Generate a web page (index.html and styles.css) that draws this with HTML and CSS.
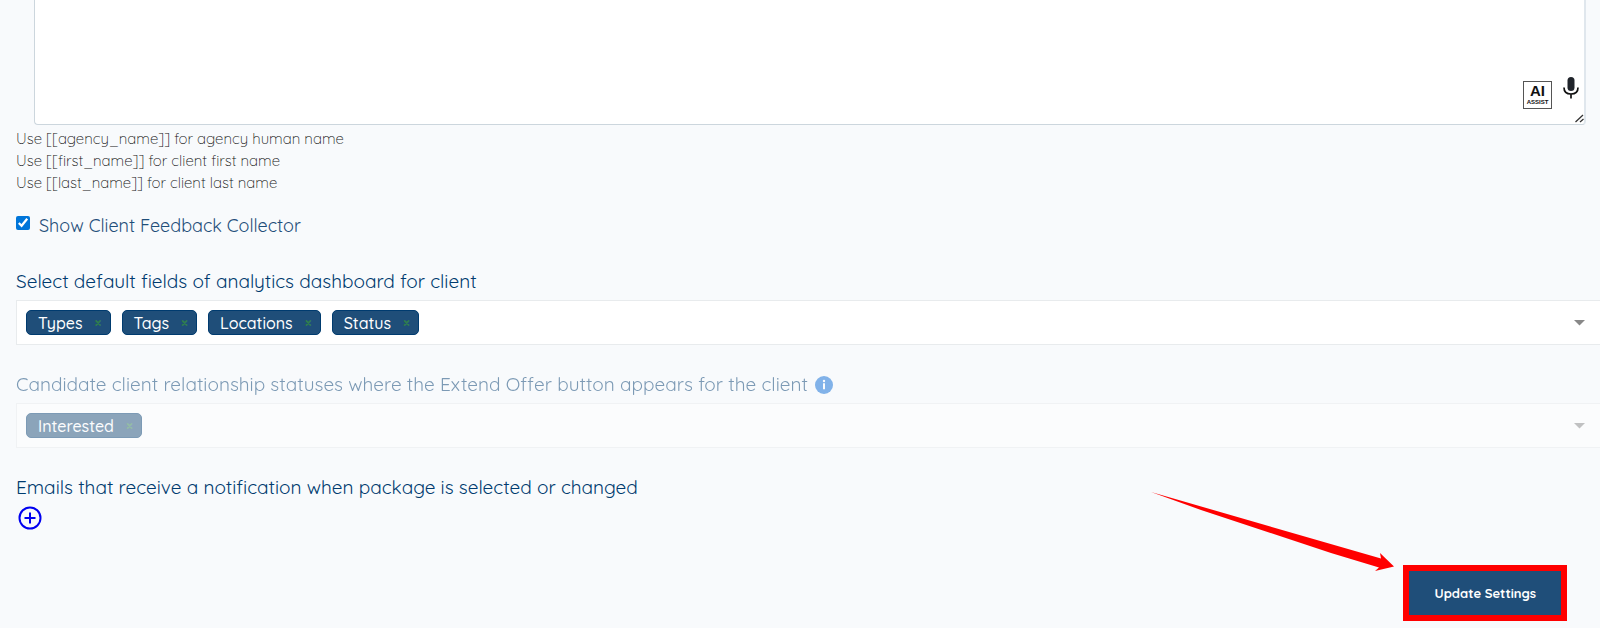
FILE: index.html
```html
<!DOCTYPE html>
<html lang="en">
<head>
<meta charset="utf-8">
<title>Client Settings</title>
<meta name="viewport" content="width=device-width, initial-scale=1">
<link rel="stylesheet" href="styles.css">
</head>
<body>
<form class="settings">
  <div class="editor">
    <textarea class="editor-input" aria-label="Message template"></textarea>
    <div class="editor-tools">
      <button type="button" class="ai-assist"><span class="ai-title">AI</span><span class="ai-sub">ASSIST</span></button>
      <button type="button" class="icon-button" aria-label="Dictate">
        <svg width="16" height="22" viewBox="0 0 16 22"><rect x="4.5" y="0" width="7" height="14" rx="3.5" fill="#20242b"/><path d="M1 10.5C1 15 4 17 8 17s7-2 7-6.500M8 17v4.500" fill="none" stroke="#111" stroke-width="1.700"/></svg>
      </button>
    </div>
    <svg class="editor-grip" width="9" height="9" viewBox="0 0 9 9"><path d="M0.500 8L8 1M5 8L8.500 5" stroke="#333" stroke-width="1.300" fill="none"/></svg>
  </div>

  <div class="help">
    <p>Use [[agency_name]] for agency human name</p>
    <p>Use [[first_name]] for client first name</p>
    <p>Use [[last_name]] for client last name</p>
  </div>

  <label class="check"><input type="checkbox" class="check-box" checked><span>Show Client Feedback Collector</span></label>

  <section class="field">
    <h2 class="field-label">Select default fields of analytics dashboard for client</h2>
    <div class="select">
      <span class="chip">Types<button type="button" class="chip-remove" aria-label="Remove Types">×</button></span>
      <span class="chip">Tags<button type="button" class="chip-remove" aria-label="Remove Tags">×</button></span>
      <span class="chip">Locations<button type="button" class="chip-remove" aria-label="Remove Locations">×</button></span>
      <span class="chip">Status<button type="button" class="chip-remove" aria-label="Remove Status">×</button></span>
      <button type="button" class="icon-button select-toggle" aria-label="Open fields list"><svg width="11" height="6" viewBox="0 0 11 6"><path d="M0 0h11L5.500 5.500z" fill="#888"/></svg></button>
    </div>
  </section>

  <section class="field field-disabled">
    <h2 class="field-label">Candidate client relationship statuses where the Extend Offer button appears for the client
      <svg class="info" width="18" height="18" viewBox="0 0 18 18"><circle cx="9" cy="9" r="9" fill="#0a6bd6"/><path d="M9 7.200V13.300" stroke="#fff" stroke-width="2" fill="none"/><circle cx="9" cy="5" r="1.200" fill="#fff"/></svg>
    </h2>
    <div class="select">
      <span class="chip">Interested<button type="button" class="chip-remove" aria-label="Remove Interested" disabled>×</button></span>
      <button type="button" class="icon-button select-toggle" aria-label="Open statuses list" disabled><svg width="11" height="6" viewBox="0 0 11 6"><path d="M0 0h11L5.500 5.500z" fill="#888"/></svg></button>
    </div>
  </section>

  <section class="field">
    <h2 class="field-label">Emails that receive a notification when package is selected or changed</h2>
    <button type="button" class="icon-button add" aria-label="Add email"><svg width="24" height="24" viewBox="0 0 24 24"><g fill="none" stroke="#0000f0" stroke-width="2"><circle cx="12" cy="12" r="10.500"/><path d="M12 6.500v11M6.500 12h11"/></g></svg></button>
  </section>

  <div class="actions">
    <div class="highlight">
      <svg class="arrow" width="243" height="80" viewBox="0 0 243 80"><path d="M0 0L230 66.500L229 61L243 74.500L224 79L228 75.500L180 61L50 18z" fill="#f00"/></svg>
      <button type="submit" class="submit">Update Settings</button>
    </div>
  </div>
</form>
</body>
</html>
```
FILE: styles.css
```css
* { box-sizing: border-box; }

body {
  margin: 0;
  background: #f8fafc;
  color: #003b6f;
  font-family: Quicksand, Lato, "Open Sans", sans-serif;
  overflow-x: hidden;
}

button { font-family: inherit; }

.settings { padding-left: 16px; }

.editor {
  position: relative;
  display: flex;
  margin: 0 14px 0 18px;
}

.editor-input {
  flex: 1;
  height: 125px;
  resize: none;
  border: 1px solid #ccd6dd;
  border-top: 0;
  border-right: 2px solid #e0e7ed;
  border-radius: 0 0 4px 4px;
  background: #fff;
}

.editor-tools {
  position: absolute;
  right: 7px;
  bottom: 16px;
  display: flex;
  align-items: flex-end;
  gap: 11px;
}

.ai-assist {
  display: flex;
  flex-direction: column;
  align-items: center;
  justify-content: center;
  width: 29px;
  height: 28px;
  padding: 0;
  border: 1px solid #555;
  background: #fff;
  color: #111;
  font-family: "Liberation Sans", Arial, sans-serif;
  font-weight: 700;
}

.ai-title { font-size: 15px; line-height: 14px; }
.ai-sub { font-size: 6px; line-height: 8px; }

.icon-button {
  display: flex;
  padding: 0;
  border: 0;
  background: none;
}

.editor-tools .icon-button { padding-bottom: 10px; }

.editor-grip {
  position: absolute;
  right: 2px;
  bottom: 2px;
}

.help {
  padding-top: 3px;
  color: #111;
  font-size: 15px;
  font-weight: 300;
  line-height: 22px;
}

.help p { margin: 0; }

.check {
  display: flex;
  width: fit-content;
  align-items: flex-start;
  gap: 9px;
  margin-top: 20px;
  color: #1f4e79;
  font-size: 18px;
  font-weight: 400;
  line-height: 24px;
}

.check-box {
  width: 14px;
  height: 14px;
  margin: 2px 0 0;
  accent-color: #0075d9;
}

.field { margin-top: 27px; }
.check + .field { margin-top: 31px; }
.field-disabled { opacity: 0.5; }

.field-label {
  display: flex;
  align-items: center;
  gap: 7px;
  margin: 0 0 6px;
  font-size: 19px;
  font-weight: 400;
  line-height: 25px;
}

.select {
  display: flex;
  align-items: center;
  gap: 11px;
  min-height: 45px;
  padding: 0 15px 0 9px;
  border: 1px solid #e8ebed;
  border-right: 0;
  background: #fff;
}

.select-toggle { margin-left: auto; }

.chip {
  display: flex;
  align-items: center;
  gap: 12px;
  height: 25px;
  padding: 0 8px 0 11px;
  border: 1px solid #003b6f;
  border-radius: 5px;
  background: #1f4e79;
  color: #fff;
  font-size: 16px;
  font-weight: 500;
}

.chip-remove {
  padding: 0;
  border: 0;
  background: none;
  color: #2f7d4f;
  font-size: 14px;
  font-weight: 700;
  line-height: 16px;
}

.add { margin-left: 2px; }

.actions {
  display: flex;
  justify-content: flex-end;
  padding: 35px 33px 6px 0;
}

.highlight {
  position: relative;
  border: 6px solid #f00;
}

.submit {
  display: block;
  min-height: 44px;
  padding: 0 25px;
  border: 0;
  background: #1f4e79;
  color: #fff;
  font-size: 13px;
  font-weight: 700;
}

.arrow {
  position: absolute;
  right: calc(100% + 15px);
  bottom: 43px;
}
```
